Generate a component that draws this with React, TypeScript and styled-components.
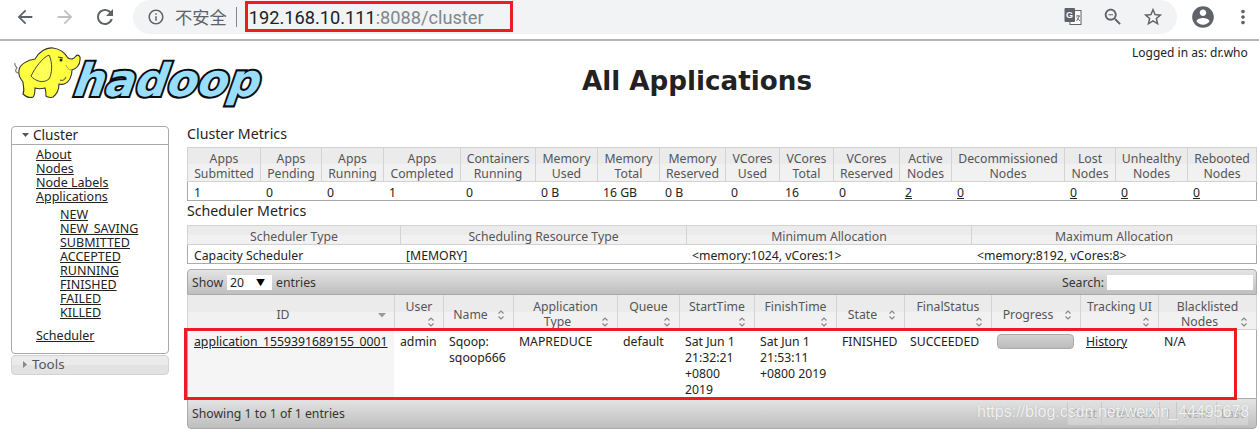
import React from 'react';
import styled, { createGlobalStyle } from 'styled-components';

const Global = createGlobalStyle`
  html, body { margin: 0; padding: 0; background: #fff; }
  body { font-family: "Noto Sans", "Noto Sans CJK SC", sans-serif; font-size: 12.25px; color: #222; overflow: hidden; }
  * { box-sizing: border-box; }
`;

const Page = styled.div`width: 1259px; height: 431px; position: relative; overflow: hidden;`;

const Toolbar = styled.div`
  display: flex; align-items: flex-start; height: 41px; padding-left: 5px;
  border-bottom: 2px solid #b4b4b4; background: #fff;
`;
const NavBtn = styled.div<{ $dim?: boolean }>`
  width: 40px; height: 34px; display: flex; align-items: center; justify-content: center;
  color: ${p => (p.$dim ? '#bdc1c6' : '#5f6368')};
`;
const Pill = styled.div`
  margin-left: 8px; width: 1044px; height: 34px; background: #f1f3f4;
  border-radius: 17px;
  display: flex; align-items: center; padding: 0 4px 0 14px; position: relative; color: #5f6368;
`;
const Insecure = styled.span`
  font-family: "Noto Sans CJK SC", sans-serif; font-size: 17.3px; color: #5f6368; margin-left: 10px; line-height: 1;
`;
const Divider = styled.span`width: 1px; height: 20px; background: #80868b; margin: 0 12px 0 9px;`;
const Url = styled.span`font-family: Roboto, sans-serif; font-size: 18.2px; color: #80868b; flex: 1; white-space: nowrap;`;
const Host = styled.span`color: #202124;`;
const PillIcon = styled.div`width: 40px; height: 34px; display: flex; align-items: center; justify-content: center; color: #5f6368;`;
const UrlMark = styled.div`
  position: absolute; left: 112px; top: 1px; width: 268px; height: 31px; border: 3px solid #ed1c24;
`;
const Avatar = styled(NavBtn)`margin-left: 6px;`;
const Dots = styled(NavBtn)`width: 35px; padding-left: 5px;`;

const Header = styled.header`display: grid; grid-template-columns: 262px 1fr 127px; height: 85px;`;
const LogoSvg = styled.svg`display: block; width: 256px; height: 66px; margin: 1px 0 0 10px; overflow: visible;`;
const Title = styled.h1`
  margin: 0; text-align: center; font: bold 26.2px/1 "DejaVu Sans", sans-serif; color: #222; padding-top: 27px;
`;
const Logged = styled.div`font-size: 12px; line-height: 16px; padding-top: 4px; white-space: nowrap; color: #222;`;

const Main = styled.main`display: flex; gap: 18px; padding: 0 2px 0 11px;`;
const Side = styled.nav`width: 158px; flex: none;`;
const SideBox = styled.div`border: 1px solid #aaa; border-radius: 4px; height: 228px;`;
const SideHead = styled.div`
  height: 18px; border-bottom: 1px solid #aaa; display: flex; align-items: center; gap: 4px; padding: 0 0 2px 10px;
  font-size: 13.6px; line-height: 16px; color: #222;
`;
const Tools = styled.div`
  margin-top: 1px; height: 20px; border: 1px solid #d3d3d3; border-radius: 4px; display: flex; align-items: center; gap: 4px; padding: 0 0 2px 9px;
  font-size: 13.4px; color: #555; background: linear-gradient(#ebebeb 0 50%, #e2e2e2 50% 100%);
`;
const LinkList = styled.ul<{ $indent: number; $top: number }>`
  list-style: none; margin: ${p => p.$top}px 0 0; padding: 0 0 0 ${p => p.$indent}px; font-size: 12.5px; line-height: 14px;
`;
const A = styled.a`color: #222; text-decoration: underline;`;

const Content = styled.section`width: 1070px; flex: none; display: flex; flex-direction: column;`;
const H3 = styled.h3<{ $h: number; $pt: number }>`
  margin: 0; height: ${p => p.$h}px; padding-top: ${p => p.$pt}px; font-size: 14.2px; font-weight: 400; line-height: 16px; color: #222;
`;
const Table = styled.table`width: 100%; table-layout: fixed; border-collapse: separate; border-spacing: 0;`;
const Col = styled.col<{ $w: number }>`width: ${p => p.$w}px;`;
const Th = styled.th<{ $h: number }>`
  height: ${p => p.$h}px; padding: 2px 2px 0; font-weight: 400; font-size: 12.25px; line-height: 15px; color: #555; text-align: center;
  background: linear-gradient(#ebebeb 0 50%, #f1f1f1 50% 100%);
  border-top: 1px solid #d3d3d3; border-left: 1px solid #d3d3d3; border-bottom: 1px solid #d3d3d3;
  &:last-child { border-right: 1px solid #d3d3d3; }
`;
const Td = styled.td`
  height: 19px; padding: 3px 6px 0; font-size: 12.25px; line-height: 15px; color: #222; border-bottom: 1px solid #aaa; white-space: nowrap;
  &:first-child { border-left: 1px solid #aaa; }
  &:last-child { border-right: 1px solid #aaa; }
`;
const Gap = styled.div`height: 5px; flex: none;`;

const DataWrap = styled.div`position: relative; height: 159px; display: flex; flex-direction: column;`;
const Bar = styled.div<{ $h: number; $top?: boolean }>`
  height: ${p => p.$h}px; flex: none; display: flex; align-items: center; justify-content: space-between; padding: 0 3px 0 4px;
  border: 1px solid #aaa; color: #333; font-size: 12.25px;
  border-radius: ${p => (p.$top ? '4px 4px 0 0' : '0 0 4px 4px')};
  background: linear-gradient(#e4e4e4, #bebebe);
`;
const Row = styled.span`display: flex; align-items: center; gap: 3px;`;
const FakeSelect = styled.span`
  width: 45px; height: 15px; background: #fff; display: flex; align-items: center; justify-content: space-between;
  padding: 0 7px 0 3px; color: #222; line-height: 15px; margin: 0 1px 0 1px;
`;
const Arrow = styled.span`font-size: 9px; color: #000;`;
const SearchInput = styled.span`display: block; width: 146px; height: 15px; background: #fff;`;

const HeadCell = styled.th`
  height: 35px; padding: 4px 4px 0; font-weight: 400; font-size: 12.25px; line-height: 15px; color: #555; text-align: center; overflow: hidden;
  background: linear-gradient(#ebebeb 0 50%, #f1f1f1 50% 100%);
  border-left: 1px solid #d3d3d3; border-bottom: 1px solid #d3d3d3; vertical-align: middle;
  &:last-child { border-right: 1px solid #d3d3d3; }
`;
const Clip = styled.div`max-height: 30px; overflow: hidden;`;
const SortIcon = styled.svg`float: right; width: 16px; height: 15px; color: #888;`;
const BodyCell = styled.td<{ $sorted?: boolean }>`
  height: 67px; padding: 4px 6px 0; vertical-align: top; font-size: 12.25px; line-height: 16px; color: #222;
  background: ${p => (p.$sorted ? '#f5f5f5' : '#fff')};
  &:first-child { border-left: 1px solid #aaa; }
  &:last-child { border-right: 1px solid #aaa; }
`;
const Progress = styled.div`
  width: 77px; height: 15px; border: 1px solid #aaa; border-radius: 4px; background: linear-gradient(#d2d2d2, #bcbcbc);
`;
const Pager = styled.div`display: flex; height: 23px; margin-right: 5px; background: rgba(222,222,222,.55); color: #aeaeae; font-size: 12.25px;`;
const PageBtn = styled.span<{ $w: number }>`
  width: ${p => p.$w}px; display: flex; align-items: center; justify-content: center; border-left: 1px solid #c9c9c9;
`;
const RedBox = styled.div`
  position: absolute; left: -3px; top: 59px; width: 1053px; height: 72px; border: 3px solid #ed1c24; pointer-events: none;
`;
const Watermark = styled.div`
  position: absolute; left: 977px; top: 402px; font: 16px/20px "Liberation Sans", sans-serif; color: rgba(255,255,255,.85); white-space: nowrap;
  text-shadow: 0 0 1px rgba(110,110,110,.45);
`;

const I = ({ d, s = 24, box = 24 }: { d: string; s?: number; box?: number }) => (
  <svg width={s} height={s} viewBox={`0 0 ${box} ${box}`} fill="currentColor"><path d={d} /></svg>
);

const Caret = ({ down }: { down: boolean }) => (
  <svg width="7" height="7" viewBox="0 0 7 7" fill={down ? '#555' : '#888'}>
    {down ? <path d="M0 2h7L3.5 6z" /> : <path d="M2 0l4 3.5L2 7z" />}
  </svg>
);

const Sort = ({ solid }: { solid?: boolean }) => (
  <SortIcon viewBox="0 0 16 15" fill="none" stroke="currentColor" strokeWidth="1.2">
    {solid ? <path d="M4 6h8L8 10.5z" fill="#999" stroke="none" /> : <><path d="M5.5 6.5L8 4 10.5 6.5" /><path d="M5.5 9.5L8 12 10.5 9.5" /></>}
  </SortIcon>
);

const Logo = () => (
  <LogoSvg viewBox="10 42 256 66">
    <text transform="translate(73 96) skewX(-9)" x="0" y="0" textLength="186" lengthAdjust="spacingAndGlyphs" fontFamily="'DejaVu Sans', sans-serif" fontWeight="700" fontStyle="oblique" fontSize="45" fill="#99ddff" stroke="#0c0c0c" strokeWidth="4.2" paintOrder="stroke" strokeLinejoin="miter">hadoop</text>
    <path d="M15 63c-1 2 1 3 2 5M17 68c-2 2-2 4 1 5" fill="none" stroke="#777" strokeWidth="1.2" />
    <path d="M19 70C20 64 28 60 35 59C39 52 46 47 53 48C60 49 65 53 68 58C71 60 74 59 76 56C78 54 81 56 80 60C80 65 76 69 72 70C72 75 70 82 64 84C62 85 60 84 59 84C59 89 57 94 53 97C51 98 47 97 46 96C46 93 46 91 45 88C41 89 38 89 35 88C35 92 35 95 33 97C30 98 26 97 23 94C25 90 23 86 23 82C20 78 18 75 19 70Z" fill="#ffff40" stroke="#333" strokeWidth="1.1" />
    <path d="M49 55C42 58 35 68 31 76C35 81 43 84 49 79C52 74 53 63 49 55Z" fill="#ffff55" stroke="#444" strokeWidth="1" />
    <circle cx="61" cy="60" r="1.5" fill="#222" />
    <path d="M58 57l5 1M66 77c-1 3-4 4-6 3" fill="none" stroke="#333" strokeWidth="1" />
    <path d="M72 70c-3 0-5-2-6-5" fill="none" stroke="#886" strokeWidth=".8" />
  </LogoSvg>
);

const metricCols = [73, 61, 62, 77, 75, 62, 62, 66, 54, 54, 66, 52, 113, 51, 72, 70];
const metricHeads = [['Apps', 'Submitted'], ['Apps', 'Pending'], ['Apps', 'Running'], ['Apps', 'Completed'], ['Containers', 'Running'], ['Memory', 'Used'], ['Memory', 'Total'], ['Memory', 'Reserved'], ['VCores', 'Used'], ['VCores', 'Total'], ['VCores', 'Reserved'], ['Active', 'Nodes'], ['Decommissioned', 'Nodes'], ['Lost', 'Nodes'], ['Unhealthy', 'Nodes'], ['Rebooted', 'Nodes']];
const metricVals = ['1', '0', '0', '1', '0', '0 B', '16 GB', '0 B', '0', '16', '0', '2', '0', '0', '0', '0'];
const schedCols = [213, 286, 285, 286];
const dataCols = [207, 49, 70, 104, 62, 75, 82, 68, 87, 89, 78, 99];
const dataHeads = ['ID', 'User', 'Name', 'Application\nType', 'Queue', 'StartTime', 'FinishTime', 'State', 'FinalStatus', 'Progress', 'Tracking UI', 'Blacklisted\nNodes'];

const links = ['About', 'Nodes', 'Node Labels', 'Applications'];
const states = ['NEW', 'NEW_SAVING', 'SUBMITTED', 'ACCEPTED', 'RUNNING', 'FINISHED', 'FAILED', 'KILLED'];

export default function App() {
  return (
    <Page>
      <Global />
      <Toolbar>
        <NavBtn><I d="M20 11H7.83l5.59-5.59L12 4l-8 8 8 8 1.41-1.41L7.83 13H20v-2z" s={22} /></NavBtn>
        <NavBtn $dim><I d="M12 4l-1.41 1.41L16.17 11H4v2h12.17l-5.58 5.59L12 20l8-8z" s={22} /></NavBtn>
        <NavBtn><I d="M17.65 6.35C16.2 4.9 14.21 4 12 4c-4.42 0-7.99 3.58-7.99 8s3.57 8 7.99 8c3.73 0 6.84-2.55 7.73-6h-2.08c-.82 2.33-3.04 4-5.65 4-3.31 0-6-2.69-6-6s2.69-6 6-6c1.66 0 3.14.69 4.22 1.78L13 11h7V4l-2.35 2.35z" s={24} /></NavBtn>
        <Pill>
          <I d="M11 7h2v2h-2zm0 4h2v6h-2zm1-9C6.48 2 2 6.48 2 12s4.48 10 10 10 10-4.48 10-10S17.52 2 12 2zm0 18c-4.41 0-8-3.59-8-8s3.59-8 8-8 8 3.59 8 8-3.59 8-8 8z" s={18} />
          <Insecure>不安全</Insecure>
          <Divider />
          <Url><Host>192.168.10.111</Host>:8088/cluster</Url>
          <PillIcon>
            <svg width="20" height="20" viewBox="0 0 20 20">
              <rect x="7" y="3.5" width="11" height="14" fill="#fff" stroke="#5f6368" />
              <rect x="1.5" y="1" width="10.5" height="14" rx="1" fill="#5f6368" />
              <text x="6.6" y="11" textAnchor="middle" fontFamily="'Liberation Sans', sans-serif" fontWeight="700" fontSize="9" fill="#fff">G</text>
              <path d="M13 9h4M15 8v1M13.5 14l3-5M14 10.5l3 3.5" stroke="#5f6368" strokeWidth=".9" fill="none" />
            </svg>
          </PillIcon>
          <PillIcon><I d="M15.5 14h-.79l-.28-.27C15.41 12.59 16 11.11 16 9.5 16 5.91 13.09 3 9.5 3S3 5.91 3 9.5 5.91 16 9.5 16c1.61 0 3.09-.59 4.23-1.57l.27.28v.79l5 4.99L20.49 19l-4.99-5zm-6 0C7.01 14 5 11.99 5 9.5S7.01 5 9.5 5 14 7.01 14 9.5 11.99 14 9.5 14zM7 9h5v1H7z" s={22} /></PillIcon>
          <PillIcon><I d="M22 9.24l-7.19-.62L12 2 9.19 8.63 2 9.24l5.46 4.73L5.82 21 12 17.27 18.18 21l-1.63-7.03L22 9.24zM12 15.4l-3.76 2.27 1-4.28-3.32-2.88 4.38-.38L12 6.1l1.71 4.04 4.38.38-3.32 2.88 1 4.28L12 15.4z" s={22} /></PillIcon>
          <UrlMark />
        </Pill>
        <Avatar><I d="M12 2C6.48 2 2 6.48 2 12s4.48 10 10 10 10-4.48 10-10S17.52 2 12 2zm0 3c1.66 0 3 1.34 3 3s-1.34 3-3 3-3-1.34-3-3 1.34-3 3-3zm0 14.2c-2.5 0-4.71-1.28-6-3.22.03-1.99 4-3.08 6-3.08 1.99 0 5.97 1.09 6 3.08-1.29 1.94-3.5 3.22-6 3.22z" s={26} /></Avatar>
        <Dots><I d="M12 8c1.1 0 2-.9 2-2s-.9-2-2-2-2 .9-2 2 .9 2 2 2zm0 2c-1.1 0-2 .9-2 2s.9 2 2 2 2-.9 2-2-.9-2-2-2zm0 6c-1.1 0-2 .9-2 2s.9 2 2 2 2-.9 2-2-.9-2-2-2z" s={22} /></Dots>
      </Toolbar>
      <Header>
        <Logo />
        <Title>All Applications</Title>
        <Logged>Logged in as: dr.who</Logged>
      </Header>
      <Main>
        <Side>
          <SideBox>
            <SideHead><Caret down />Cluster</SideHead>
            <LinkList $indent={24} $top={3}>{links.map(l => <li key={l}><A>{l}</A></li>)}</LinkList>
            <LinkList $indent={48} $top={4}>{states.map(l => <li key={l}><A>{l}</A></li>)}</LinkList>
            <LinkList $indent={24} $top={9}><li><A>Scheduler</A></li></LinkList>
          </SideBox>
          <Tools><Caret down={false} />Tools</Tools>
        </Side>
        <Content>
          <H3 $h={21} $pt={0}>Cluster Metrics</H3>
          <Table>
            <colgroup>{metricCols.map((w, i) => <Col key={i} $w={w} />)}</colgroup>
            <thead><tr>{metricHeads.map((h, i) => <Th key={i} $h={35}>{h[0]}<br />{h[1]}</Th>)}</tr></thead>
            <tbody><tr>{metricVals.map((v, i) => <Td key={i}>{i >= 11 ? <A>{v}</A> : v}</Td>)}</tr></tbody>
          </Table>
          <H3 $h={24} $pt={2}>Scheduler Metrics</H3>
          <Table>
            <colgroup>{schedCols.map((w, i) => <Col key={i} $w={w} />)}</colgroup>
            <thead><tr>{['Scheduler Type', 'Scheduling Resource Type', 'Minimum Allocation', 'Maximum Allocation'].map(h => <Th key={h} $h={20}>{h}</Th>)}</tr></thead>
            <tbody><tr><Td>Capacity Scheduler</Td><Td>[MEMORY]</Td><Td>&lt;memory:1024, vCores:1&gt;</Td><Td>&lt;memory:8192, vCores:8&gt;</Td></tr></tbody>
          </Table>
          <Gap />
          <DataWrap>
            <Bar $h={26} $top>
              <Row>Show<FakeSelect>20<Arrow>▼</Arrow></FakeSelect>entries</Row>
              <Row>Search:<SearchInput /></Row>
            </Bar>
            <Table>
              <colgroup>{dataCols.map((w, i) => <Col key={i} $w={w} />)}</colgroup>
              <thead>
                <tr>
                  {dataHeads.map((h, i) => {
                    const [a, b] = h.split('\n');
                    return <HeadCell key={h}><Clip>{a}{b && <br />}{b}<Sort solid={i === 0} /></Clip></HeadCell>;
                  })}
                </tr>
              </thead>
              <tbody>
                <tr>
                  <BodyCell $sorted><A>application_1559391689155_0001</A></BodyCell>
                  <BodyCell>admin</BodyCell>
                  <BodyCell>Sqoop: sqoop666</BodyCell>
                  <BodyCell>MAPREDUCE</BodyCell>
                  <BodyCell>default</BodyCell>
                  <BodyCell>Sat Jun 1 21:32:21 +0800 2019</BodyCell>
                  <BodyCell>Sat Jun 1 21:53:11 +0800 2019</BodyCell>
                  <BodyCell>FINISHED</BodyCell>
                  <BodyCell>SUCCEEDED</BodyCell>
                  <BodyCell><Progress /></BodyCell>
                  <BodyCell><A>History</A></BodyCell>
                  <BodyCell>N/A</BodyCell>
                </tr>
              </tbody>
            </Table>
            <Bar $h={31}>
              <span>Showing 1 to 1 of 1 entries</span>
              <Pager>
                <PageBtn $w={34}>First</PageBtn>
                <PageBtn $w={58}>Previous</PageBtn>
                <PageBtn $w={17}>1</PageBtn>
                <PageBtn $w={40}>Next</PageBtn>
                <PageBtn $w={32}>Last</PageBtn>
              </Pager>
            </Bar>
            <RedBox />
          </DataWrap>
        </Content>
      </Main>
      <Watermark>https://blog.csdn.net/weixin_44495678</Watermark>
    </Page>
  );
}
